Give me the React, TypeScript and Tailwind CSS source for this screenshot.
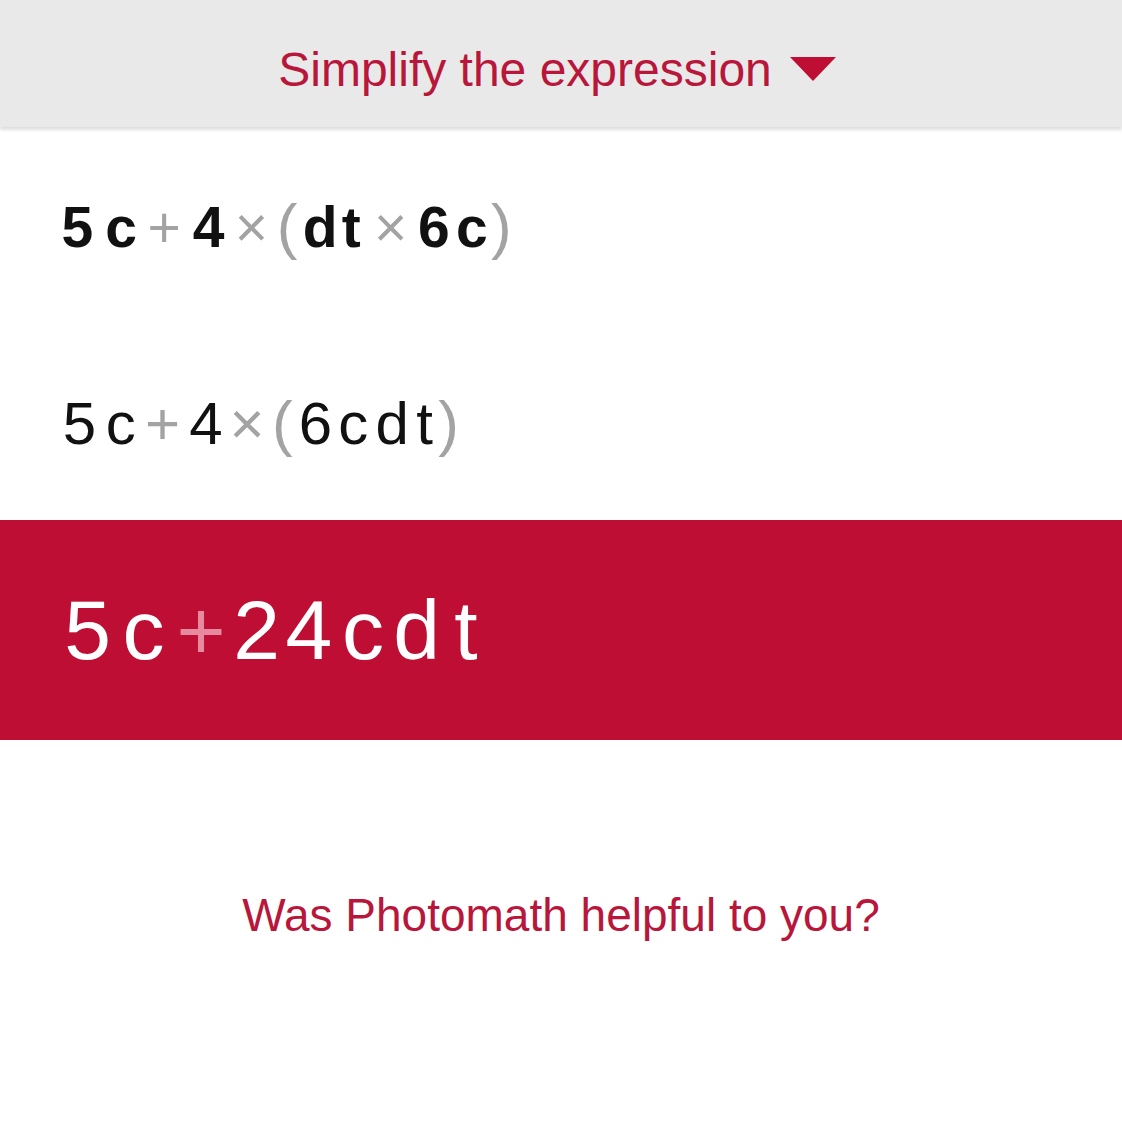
import React from "react";

type Tok = { t: string; w: number; kind?: "op" | "paren" | "num"; };

const row1: Tok[] = [
  { t: "5", w: 44.5 }, { t: "c", w: 43 }, { t: "+", w: 43.25, kind: "op" }, { t: "4", w: 45.75 },
  { t: "×", w: 40, kind: "op" }, { t: "(", w: 31.25, kind: "paren" }, { t: "d", w: 30.25 }, { t: "t", w: 36.25 },
  { t: "×", w: 43, kind: "op" }, { t: "6", w: 43 }, { t: "c", w: 33.25 }, { t: ")", w: 25.5, kind: "paren" },
];
const row2: Tok[] = [
  { t: "5", w: 41 }, { t: "c", w: 41.25 }, { t: "+", w: 42.75, kind: "op" }, { t: "4", w: 43.75 },
  { t: "×", w: 38.75, kind: "op" }, { t: "(", w: 31.5, kind: "paren" }, { t: "6", w: 35 }, { t: "c", w: 40.5 },
  { t: "d", w: 37.25 }, { t: "t", w: 27.5 }, { t: ")", w: 20.5, kind: "paren" },
];
const row3: Tok[] = [
  { t: "5", w: 55 }, { t: "c", w: 56.75 }, { t: "+", w: 58.75, kind: "op" }, { t: "2", w: 52.25 },
  { t: "4", w: 52 }, { t: "c", w: 56.25 }, { t: "d", w: 51 }, { t: "t", w: 48 },
];

function Expr({ toks, pl, size, bold, color, opColor, parenSize }: { toks: Tok[]; pl: number; size: number; bold?: boolean; color: string; opColor: string; parenSize: number }) {
  return (
    <div className="flex items-baseline leading-none" style={{ paddingLeft: pl, fontFamily: '"Liberation Sans", Arial, sans-serif' }}>
      {toks.map((k, i) => (
        <span
          key={i}
          className="inline-block text-center"
          style={{
            width: k.w,
            fontSize: k.kind === "paren" ? parenSize : size,
            fontWeight: k.kind === "paren" || k.kind === "op" ? 400 : bold ? 700 : 400,
            color: k.kind ? opColor : color,
          }}
        >
          {k.t}
        </span>
      ))}
    </div>
  );
}

export default function App() {
  return (
    <div className="w-[1122px] h-[1125px] bg-white overflow-hidden" style={{ fontFamily: '"Liberation Sans", Arial, sans-serif' }}>
      <div className="relative z-10 h-[127px] bg-[#e9e9e9] shadow-[0_3px_3px_rgba(0,0,0,0.13)] flex items-center justify-center pt-[12px] pr-[8px]">
        <span className="text-[48px] leading-none text-[#b8163a]">Simplify the expression</span>
        <svg className="ml-[18px] mt-[-2px]" width="46" height="24" viewBox="0 0 46 24">
          <polygon points="0,0 46,0 23,24" fill="#be0e34" />
        </svg>
      </div>
      <div className="h-[198px] flex items-center">
        <Expr toks={row1} pl={55} size={57} bold color="#111111" opColor="#a3a3a3" parenSize={62} />
      </div>
      <div className="h-[195px] flex items-center">
        <Expr toks={row2} pl={59} size={60} color="#111111" opColor="#a3a3a3" parenSize={62} />
      </div>
      <div className="h-[220px] bg-[#be0e34] flex items-center">
        <Expr toks={row3} pl={60} size={84} color="#ffffff" opColor="#e58a9f" parenSize={84} />
      </div>
      <div className="pt-[152px] flex justify-center">
        <span className="text-[46px] leading-none text-[#b8163a]">Was Photomath helpful to you?</span>
      </div>
    </div>
  );
}
